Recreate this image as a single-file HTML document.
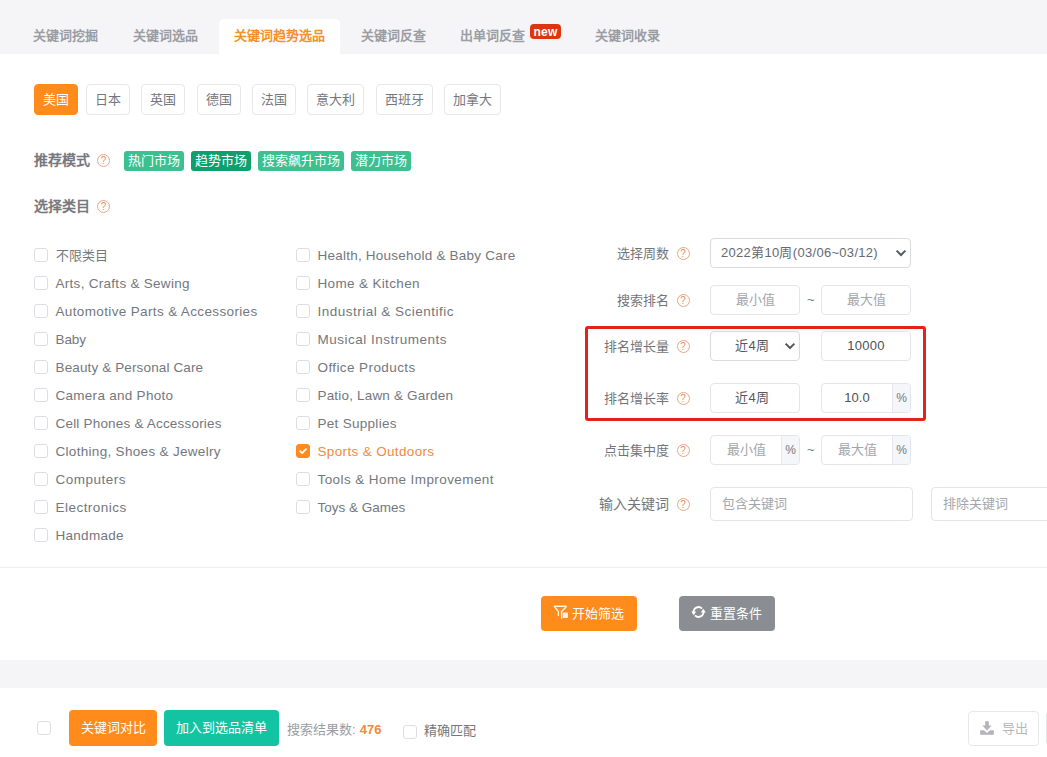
<!DOCTYPE html>
<html lang="zh-CN">
<head>
<meta charset="utf-8">
<title>关键词趋势选品</title>
<style>
*{box-sizing:border-box;margin:0;padding:0}
html,body{width:1047px;height:757px;overflow:hidden;background:#fff}
body{font-family:"Liberation Sans",sans-serif;font-size:13px;color:#606266;position:relative}
.abs{position:absolute;white-space:nowrap}
/* top tab bar */
#topbar{left:0;top:0;width:1047px;height:54px;background:#f5f5f7}
.tab{height:35px;line-height:33px;top:19px;font-size:13px;font-weight:bold;color:#9a9da4;text-align:center}
.tab.on{background:#fff;color:#f5902c;border-radius:5px 5px 0 0}
.new{top:24px;left:530px;width:31px;height:15px;background:#de3511;border-radius:4px;color:#fff;font-size:12px;font-weight:bold;line-height:17px;text-align:center;letter-spacing:.2px}
/* country buttons */
.cty{top:84px;height:31px;line-height:29px;border:1px solid #e6e8ec;border-radius:4px;background:#fff;color:#74777d;text-align:center;font-size:13px}
.cty.on{background:#ff8b1d;border-color:#ff8b1d;color:#fff}
/* section labels */
.sec{font-size:14px;font-weight:bold;color:#75787e;height:20px;line-height:20px;left:34px}
.q{width:13px;height:13px;border:1px solid #e8a585;border-radius:50%;color:#e58f68;font-size:10px;line-height:11px;text-align:center;font-weight:normal}
.tag{top:151px;height:20px;line-height:19px;border-radius:3px;background:#3cc08f;color:#fff;font-size:13px;text-align:center}
.tag.dk{background:#0e9f6e}
/* checkbox list */
.cb{width:14px;height:14px;border:1px solid #dcdee4;border-radius:3px;background:#fff}
.cb.on{background:#ff8b1d;border-color:#ff8b1d}
.it{height:20px;line-height:20px;font-size:13.5px;color:#74777d}
.it.on{color:#f08a3c}
/* form */
.lb{height:20px;line-height:20px;font-size:13px;color:#72757b;text-align:right;width:120px;left:549px}
.inp{height:30px;line-height:28px;border:1px solid #e3e5ea;border-radius:4px;background:#fff;font-size:13px;color:#55585e;text-align:center;overflow:hidden}
.ph{color:#a3a6ac}
.add{position:absolute;right:0;top:0;bottom:0;width:18px;background:#f5f6f9;border-left:1px solid #e6e8ec;color:#74777d;font-size:12px;text-align:center}
.til{color:#74777d;font-size:13px}
.btn{height:35px;line-height:35px;border-radius:4px;color:#fff;font-size:13px;text-align:center}
</style>
</head>
<body>
<div class="abs" id="topbar"></div>
<div class="abs tab" style="left:19px;width:92px">关键词挖掘</div>
<div class="abs tab" style="left:119px;width:92px">关键词选品</div>
<div class="abs tab on" style="left:219px;width:121px">关键词趋势选品</div>
<div class="abs tab" style="left:347px;width:92px">关键词反查</div>
<div class="abs tab" style="left:446.5px;width:92px">出单词反查</div>
<div class="abs new">new</div>
<div class="abs tab" style="left:581.5px;width:92px">关键词收录</div>

<div class="abs cty on" style="left:34px;width:44px">美国</div>
<div class="abs cty" style="left:86px;width:44px">日本</div>
<div class="abs cty" style="left:141px;width:44px">英国</div>
<div class="abs cty" style="left:197px;width:44px">德国</div>
<div class="abs cty" style="left:252px;width:44px">法国</div>
<div class="abs cty" style="left:307px;width:57px">意大利</div>
<div class="abs cty" style="left:376px;width:57px">西班牙</div>
<div class="abs cty" style="left:444px;width:57px">加拿大</div>

<div class="abs sec" style="top:150px">推荐模式</div>
<div class="abs q" style="left:97px;top:154px">?</div>
<div class="abs tag" style="left:124px;width:60px">热门市场</div>
<div class="abs tag dk" style="left:191px;width:60px">趋势市场</div>
<div class="abs tag" style="left:258px;width:86px">搜索飙升市场</div>
<div class="abs tag" style="left:351px;width:60px">潜力市场</div>

<div class="abs sec" style="top:196px">选择类目</div>
<div class="abs q" style="left:97px;top:200px">?</div>

<div class="abs cb" style="left:34px;top:248px"></div>
<div class="abs it" style="left:55.5px;top:246px;font-size:13px">不限类目</div>
<div class="abs cb" style="left:34px;top:276px"></div>
<div class="abs it" style="left:55.5px;top:274px;letter-spacing:0.285px">Arts, Crafts &amp; Sewing</div>
<div class="abs cb" style="left:34px;top:304px"></div>
<div class="abs it" style="left:55.5px;top:302px;letter-spacing:0.358px">Automotive Parts &amp; Accessories</div>
<div class="abs cb" style="left:34px;top:332px"></div>
<div class="abs it" style="left:55.5px;top:330px;letter-spacing:-0.127px">Baby</div>
<div class="abs cb" style="left:34px;top:360px"></div>
<div class="abs it" style="left:55.5px;top:358px;letter-spacing:0.131px">Beauty &amp; Personal Care</div>
<div class="abs cb" style="left:34px;top:388px"></div>
<div class="abs it" style="left:55.5px;top:386px;letter-spacing:0.278px">Camera and Photo</div>
<div class="abs cb" style="left:34px;top:416px"></div>
<div class="abs it" style="left:55.5px;top:414px;letter-spacing:0.195px">Cell Phones &amp; Accessories</div>
<div class="abs cb" style="left:34px;top:444px"></div>
<div class="abs it" style="left:55.5px;top:442px;letter-spacing:0.309px">Clothing, Shoes &amp; Jewelry</div>
<div class="abs cb" style="left:34px;top:472px"></div>
<div class="abs it" style="left:55.5px;top:470px;letter-spacing:0.496px">Computers</div>
<div class="abs cb" style="left:34px;top:500px"></div>
<div class="abs it" style="left:55.5px;top:498px;letter-spacing:0.467px">Electronics</div>
<div class="abs cb" style="left:34px;top:528px"></div>
<div class="abs it" style="left:55.5px;top:526px;letter-spacing:0.279px">Handmade</div>
<div class="abs cb" style="left:296px;top:248px"></div>
<div class="abs it" style="left:317.5px;top:246px;letter-spacing:0.226px">Health, Household &amp; Baby Care</div>
<div class="abs cb" style="left:296px;top:276px"></div>
<div class="abs it" style="left:317.5px;top:274px;letter-spacing:0.343px">Home &amp; Kitchen</div>
<div class="abs cb" style="left:296px;top:304px"></div>
<div class="abs it" style="left:317.5px;top:302px;letter-spacing:0.486px">Industrial &amp; Scientific</div>
<div class="abs cb" style="left:296px;top:332px"></div>
<div class="abs it" style="left:317.5px;top:330px;letter-spacing:0.497px">Musical Instruments</div>
<div class="abs cb" style="left:296px;top:360px"></div>
<div class="abs it" style="left:317.5px;top:358px;letter-spacing:0.404px">Office Products</div>
<div class="abs cb" style="left:296px;top:388px"></div>
<div class="abs it" style="left:317.5px;top:386px;letter-spacing:0.179px">Patio, Lawn &amp; Garden</div>
<div class="abs cb" style="left:296px;top:416px"></div>
<div class="abs it" style="left:317.5px;top:414px;letter-spacing:0.290px">Pet Supplies</div>
<div class="abs cb on" style="left:296px;top:444px"><svg width="12" height="12" viewBox="0 0 12 12" style="display:block"><path d="M3.1 6.1l2 2L9 4.2" fill="none" stroke="#fff" stroke-width="1.8" stroke-linecap="round" stroke-linejoin="round"/></svg></div>
<div class="abs it on" style="left:317.5px;top:442px;letter-spacing:0.346px">Sports &amp; Outdoors</div>
<div class="abs cb" style="left:296px;top:472px"></div>
<div class="abs it" style="left:317.5px;top:470px;letter-spacing:0.410px">Tools &amp; Home Improvement</div>
<div class="abs cb" style="left:296px;top:500px"></div>
<div class="abs it" style="left:317.5px;top:498px;letter-spacing:-0.007px">Toys &amp; Games</div>

<!-- right-side form -->
<div class="abs lb" style="top:244px">选择周数</div>
<div class="abs q" style="left:676.5px;top:247px">?</div>
<div class="abs inp" style="left:710px;top:238px;width:201px;text-align:left;padding-left:10px;letter-spacing:.3px;color:#66696f;border-color:#d9dbe0">2022第10周(03/06~03/12)</div>

<svg class="abs" style="left:895px;top:249px" width="12" height="8" viewBox="0 0 12 8"><path d="M1.6 1.6L6 6L10.4 1.6" fill="none" stroke="#55585e" stroke-width="2"/></svg>
<div class="abs lb" style="top:291px">搜索排名</div>
<div class="abs q" style="left:676.5px;top:294px">?</div>
<div class="abs inp ph" style="left:710px;top:285px;width:90px">最小值</div>
<div class="abs til" style="left:807px;top:292px">~</div>
<div class="abs inp ph" style="left:821px;top:285px;width:90px">最大值</div>

<div class="abs" style="left:585px;top:326px;width:341px;height:95px;border:3px solid #e3221a;border-radius:3px"></div>

<div class="abs lb" style="top:337px">排名增长量</div>
<div class="abs q" style="left:676.5px;top:340px">?</div>
<div class="abs inp" style="left:710px;top:331px;width:90px;padding-right:6px;border-color:#d9dbe0">近4周</div>
<div class="abs inp" style="left:821px;top:331px;width:90px;color:#4d5055;letter-spacing:.3px">10000</div>

<svg class="abs" style="left:784px;top:342px" width="12" height="8" viewBox="0 0 12 8"><path d="M1.6 1.6L6 6L10.4 1.6" fill="none" stroke="#55585e" stroke-width="2"/></svg>
<div class="abs lb" style="top:389px">排名增长率</div>
<div class="abs q" style="left:676.5px;top:392px">?</div>
<div class="abs inp" style="left:710px;top:383px;width:90px;padding-right:6px">近4周</div>
<div class="abs inp" style="left:821px;top:383px;width:90px;padding-right:18px;color:#4d5055">10.0<span class="add">%</span></div>

<div class="abs lb" style="top:441px">点击集中度</div>
<div class="abs q" style="left:676.5px;top:444px">?</div>
<div class="abs inp ph" style="left:710px;top:435px;width:90px;padding-right:18px">最小值<span class="add">%</span></div>
<div class="abs til" style="left:807px;top:442px">~</div>
<div class="abs inp ph" style="left:821px;top:435px;width:90px;padding-right:18px">最大值<span class="add">%</span></div>

<div class="abs lb" style="top:494px;font-size:14px">输入关键词</div>
<div class="abs q" style="left:676.5px;top:498px">?</div>
<div class="abs inp ph" style="left:710px;top:487px;width:203px;height:34px;line-height:32px;text-align:left;padding-left:11px">包含关键词</div>
<div class="abs inp ph" style="left:931px;top:487px;width:203px;height:34px;line-height:32px;text-align:left;padding-left:11px">排除关键词</div>

<div class="abs" style="left:0;top:567px;width:1047px;height:1px;background:#eceef2"></div>

<div class="abs btn" style="left:541px;top:596px;width:96px;background:#ff8b1d;padding-left:31px;text-align:left">开始筛选</div>
<div class="abs btn" style="left:679px;top:596px;width:96px;background:#8a8d91;padding-left:31px;text-align:left">重置条件</div>

<svg class="abs" style="left:552px;top:604px" width="18" height="16" viewBox="0 0 18 16"><path d="M3 2.2H13.6Q14.6 2.2 14 3L9.6 7.6V14.2" fill="none" stroke="#fff6dc" stroke-width="1.4" stroke-linejoin="round" stroke-linecap="round"/><path d="M3 2.2Q2 2.2 2.6 3L6.4 7.6V11.6" fill="none" stroke="#fff6dc" stroke-width="1.4" stroke-linejoin="round" stroke-linecap="round"/><rect x="10.8" y="8.6" width="5.2" height="5.4" rx=".6" fill="#fff3d6"/></svg>
<svg class="abs" style="left:689px;top:603px" width="19" height="18" viewBox="0 0 19 18"><path d="M4.6 9.6A4.9 4.9 0 0 1 13 5.6" fill="none" stroke="#fff" stroke-width="1.8"/><path d="M14.4 8.4A4.9 4.9 0 0 1 6 12.4" fill="none" stroke="#fff" stroke-width="1.8"/><path d="M2.2 8.6H7.2L4.7 12.2Z" fill="#fff"/><path d="M16.8 9.4H11.8L14.3 5.8Z" fill="#fff"/></svg>
<div class="abs" style="left:0;top:660px;width:1047px;height:28px;background:#f5f5f7"></div>

<div class="abs cb" style="left:37px;top:721px"></div>
<div class="abs btn" style="left:69px;top:710px;width:88px;height:36px;line-height:35px;background:#ff8b1d">关键词对比</div>
<div class="abs btn" style="left:164px;top:710px;width:115px;height:36px;line-height:35px;background:#13c3a1">加入到选品清单</div>
<div class="abs" style="left:287px;top:720px;height:20px;line-height:20px;color:#9a9da4">搜索结果数: <b style="color:#f08a3c;margin-left:.5px">476</b></div>
<div class="abs cb" style="left:403px;top:725px"></div>
<div class="abs" style="left:424px;top:721px;height:20px;line-height:20px;color:#74777d">精确匹配</div>
<div class="abs" style="left:968px;top:711px;width:71px;height:35px;border:1px solid #e6e8ec;border-radius:4px;line-height:33px;color:#b4b7bd;padding-left:33px">导出</div>
<div class="abs" style="left:1046px;top:711px;width:30px;height:35px;border:1px solid #e6e8ec;border-radius:4px"></div>
<svg class="abs" style="left:979px;top:720px" width="16" height="16" viewBox="0 0 16 16"><path d="M6.2 1.2H9.8V5.6H12.6L8 10.4L3.4 5.6H6.2Z" fill="#b3b3bb"/><path d="M1.2 10.2H4.8L8 13L11.2 10.2H14.8V14.8H1.2Z" fill="#b3b3bb"/></svg>
</body>
</html>
